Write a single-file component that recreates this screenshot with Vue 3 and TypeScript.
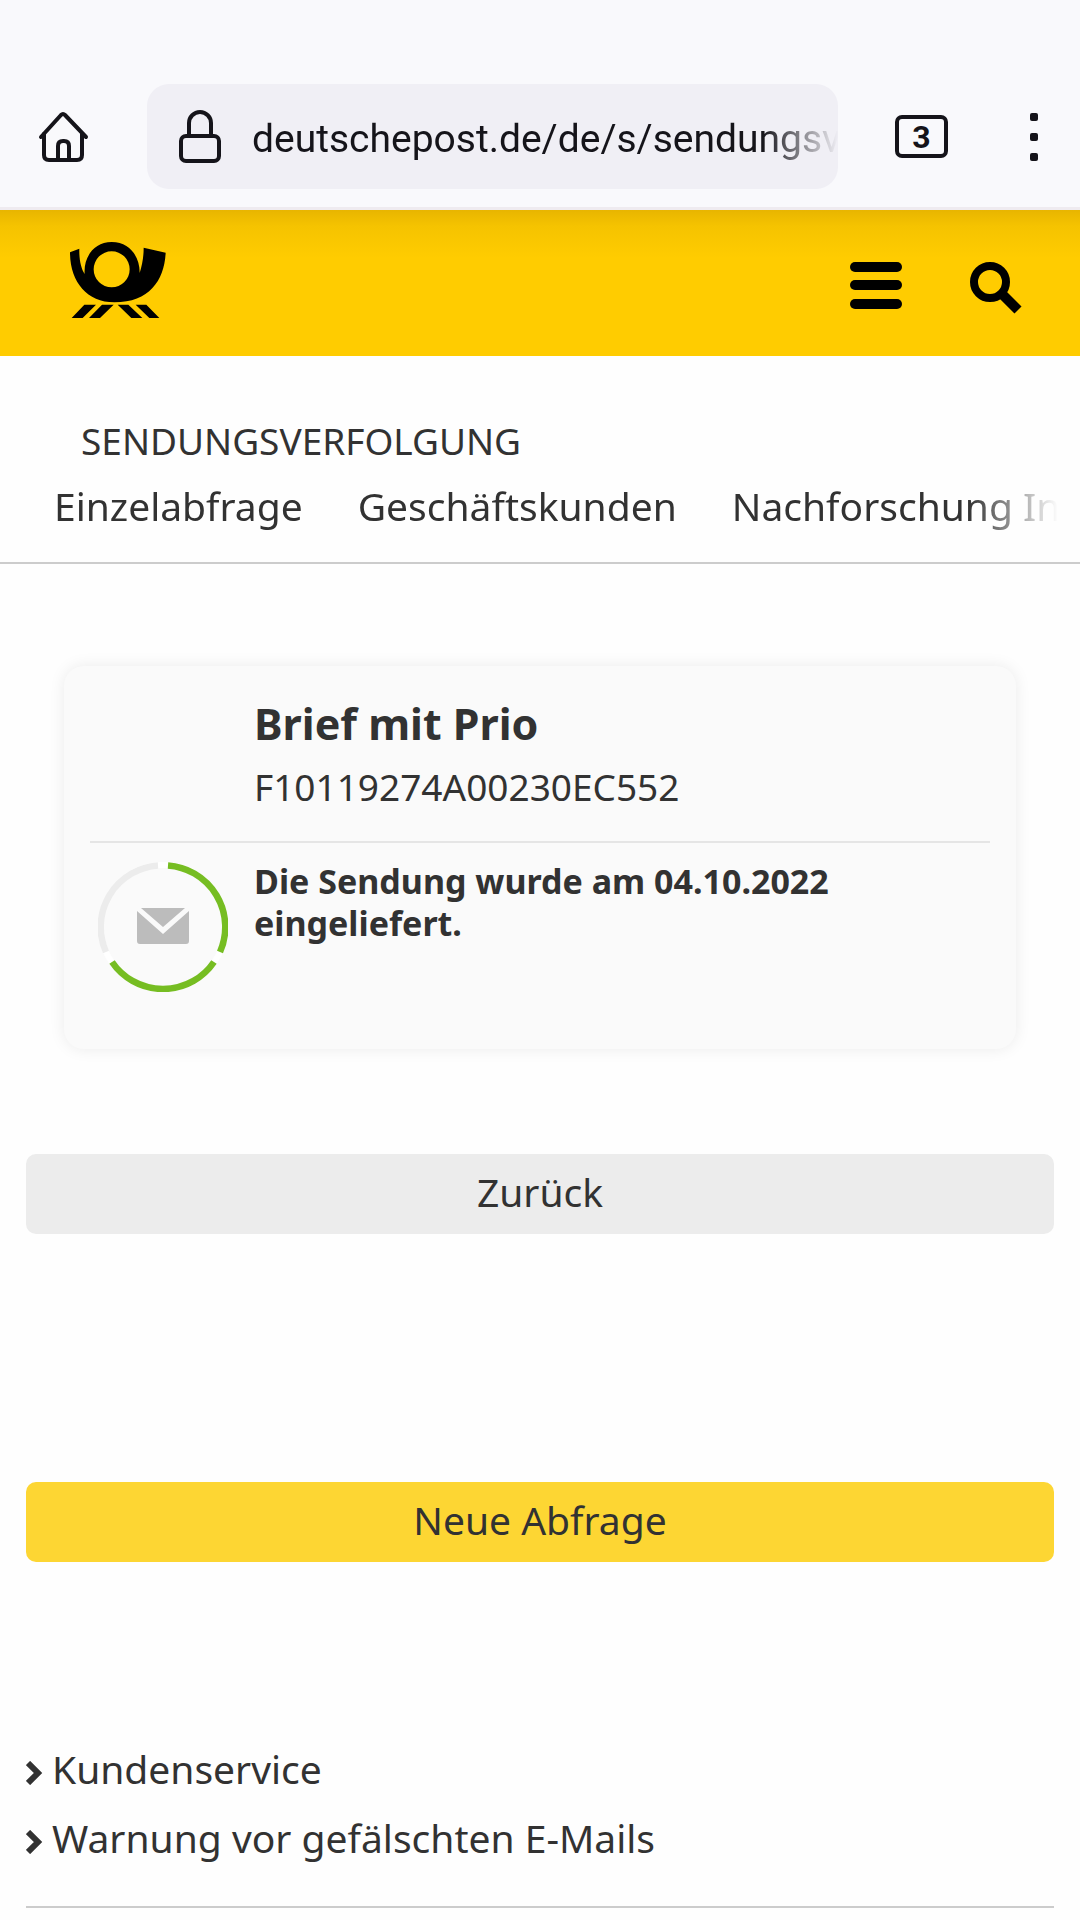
<script setup lang="ts">
import { ref } from 'vue'

interface NavLink {
  label: string
  href: string
}

const address = ref('deutschepost.de/de/s/sendungsverfolgung')
const openTabs = ref(3)

const tabs: NavLink[] = [
  { label: 'Einzelabfrage', href: '#einzelabfrage' },
  { label: 'Geschäftskunden', href: '#geschaeftskunden' },
  { label: 'Nachforschung In', href: '#nachforschung' },
]

const serviceLinks: NavLink[] = [
  { label: 'Kundenservice', href: '#kundenservice' },
  { label: 'Warnung vor gefälschten E-Mails', href: '#warnung' },
]

const shipment = {
  product: 'Brief mit Prio',
  code: 'F10119274A00230EC552',
  status: 'Die Sendung wurde am 04.10.2022 eingeliefert.',
}
</script>

<template>
  <div class="screen">
    <div class="browser">
      <button class="plain home" type="button" aria-label="Startseite">
        <svg width="52" height="52" viewBox="0 0 52 52" fill="none" stroke="currentColor" stroke-width="4" stroke-linecap="round" stroke-linejoin="round">
          <path d="M3 26 23 4Q25 2 27 4L48 26" />
          <path d="M6 23V44Q6 49 11 49H39Q44 49 44 44V23" />
          <path d="M20 48V35Q20 30 25 30H26Q31 30 31 35V48" />
        </svg>
      </button>
      <div class="address">
        <svg width="44" height="54" viewBox="0 0 44 54" fill="none" stroke="currentColor" stroke-width="4">
          <rect x="4" y="26" width="38" height="25" rx="5" />
          <path d="M12 26V13a11 11 0 0 1 22 0V26" />
        </svg>
        <input v-model="address" class="url" type="text" aria-label="Adresse" spellcheck="false" />
      </div>
      <button class="plain tab-count" type="button" aria-label="Offene Tabs">
        <span class="count">{{ openTabs }}</span>
      </button>
      <button class="plain more" type="button" aria-label="Menü">
        <svg width="8" height="48" viewBox="0 0 8 48" fill="currentColor">
          <rect width="8" height="8" y="0" rx="2" />
          <rect width="8" height="8" y="20" rx="2" />
          <rect width="8" height="8" y="40" rx="2" />
        </svg>
      </button>
    </div>

    <header class="brand">
      <a class="logo" href="#start" aria-label="Deutsche Post">
        <svg width="96" height="78" viewBox="60 64 288 234">
          <path
            fill-rule="evenodd"
            d="M60 98 88 87C87 115 92 145 104 163C100 115 130 67 185 67C242 67 270 115 269 160C277 135 281 110 281 84L347 99C343 180 300 248 193 248C110 248 60 185 60 98ZM131 149a54 54 0 1 0 108 0a54 54 0 1 0-108 0Z"
          />
          <path d="M103 255H138L98 295H65ZM156 255H191L150 295H117ZM203 255H235L277 295H244ZM257 255H289L328 295H298Z" />
        </svg>
      </a>
      <button class="plain" type="button" aria-label="Navigation">
        <svg width="52" height="48" viewBox="0 0 52 48">
          <rect width="52" height="10" y="0" rx="5" />
          <rect width="52" height="10" y="18" rx="5" />
          <rect width="52" height="10" y="37" rx="5" />
        </svg>
      </button>
      <button class="plain search" type="button" aria-label="Suche">
        <svg width="52" height="52" viewBox="0 0 52 52" fill="none" stroke="currentColor">
          <circle cx="20" cy="20" r="16" stroke-width="8" />
          <path d="M31 31 48 48" stroke-width="10" />
        </svg>
      </button>
    </header>

    <nav class="sections" aria-label="Sendungsverfolgung">
      <h1 class="heading">SENDUNGSVERFOLGUNG</h1>
      <div class="tabs">
        <a v-for="tab in tabs" :key="tab.label" :href="tab.href">{{ tab.label }}</a>
      </div>
    </nav>

    <main>
      <section class="card">
        <div class="summary">
          <h2>{{ shipment.product }}</h2>
          <p>{{ shipment.code }}</p>
        </div>
        <div class="status">
          <svg class="ring" width="130" height="130" viewBox="0 0 130 130" fill="none">
            <circle cx="65" cy="65" r="62" stroke="#ffffff" stroke-width="6" />
            <g stroke-width="6.5">
              <path d="M70 3.500A61.700 61.700 0 0 1 122 90" stroke="#76bd22" />
              <path d="M116 100A61.700 61.700 0 0 1 14 100" stroke="#76bd22" />
              <path d="M8 90A61.700 61.700 0 0 1 60 3.500" stroke="#ececec" />
            </g>
            <path d="M43 46H87L65 65ZM39 49 65 72 91 49V79Q91 82 88 82H42Q39 82 39 79Z" fill="#bcbcbc" />
          </svg>
          <p>{{ shipment.status }}</p>
        </div>
      </section>

      <button class="action back" type="button">Zurück</button>
      <button class="action query" type="button">Neue Abfrage</button>
    </main>

    <footer class="service">
      <a v-for="link in serviceLinks" :key="link.label" :href="link.href">
        <svg width="17" height="24" viewBox="0 0 17 24" fill="none" stroke="currentColor" stroke-width="6">
          <path d="M2 2 12 12 2 22" />
        </svg>
        <span>{{ link.label }}</span>
      </a>
    </footer>
  </div>
</template>

<style>
body {
  background: #ffffff;
}
</style>

<style scoped>
.screen {
  min-height: 100vh;
  background: #fefefe;
  color: #323232;
  font: 39px/52px "Noto Sans", sans-serif;
}

.screen,
.screen * {
  box-sizing: border-box;
}

svg {
  display: block;
  flex: none;
}

a {
  color: inherit;
  text-decoration: none;
}

h1,
h2,
p {
  margin: 0;
}

.plain {
  display: flex;
  flex: none;
  padding: 0;
  border: 0;
  background: none;
  color: inherit;
}

.browser {
  display: flex;
  align-items: center;
  padding: 84px 42px 18px 38px;
  border-bottom: 3px solid #efebf0;
  background: #f9f9fc;
  color: #15141a;
  font-family: Roboto, sans-serif;
}

.address {
  display: flex;
  flex: 1;
  align-items: center;
  gap: 31px;
  min-width: 0;
  height: 105px;
  margin: 0 57px;
  padding-left: 30px;
  border-radius: 22px;
  background: #f0eff5;
}

.url {
  flex: 1;
  min-width: 0;
  height: 60px;
  padding: 4px 0 0;
  border: 0;
  outline: 0;
  background: none;
  color: inherit;
  font: 39px/56px Roboto, sans-serif;
  -webkit-mask-image: linear-gradient(to left, transparent, #000 76px);
  mask-image: linear-gradient(to left, transparent, #000 76px);
}

.count {
  width: 53px;
  height: 43px;
  border: 4px solid currentColor;
  border-radius: 7px;
  font: 700 32px/36px Roboto, sans-serif;
  text-align: center;
}

.more {
  margin-left: 82px;
}

.brand {
  display: flex;
  align-items: center;
  height: 146px;
  padding: 0 58px 0 70px;
  background: linear-gradient(#e8b500, #f5c300 16px, #ffcc00 48px);
  color: #000000;
}

.logo {
  margin: 0 auto 6px 0;
}

.brand .plain {
  margin-top: 6px;
}

.brand .search {
  margin-top: 10px;
  margin-left: 68px;
}

.sections {
  padding: 61px 12px 30px 54px;
  border-bottom: 2px solid #cccccc;
}

.heading {
  padding-left: 27px;
  font-size: 37px;
  font-weight: 400;
  line-height: 48px;
}

.tabs {
  display: flex;
  gap: 55px;
  margin-top: 15px;
  overflow: hidden;
  white-space: nowrap;
  -webkit-mask-image: linear-gradient(to left, transparent 10px, #000 100px);
  mask-image: linear-gradient(to left, transparent 10px, #000 100px);
}

main {
  display: flex;
  flex-direction: column;
  padding: 102px 26px 0;
}

.card {
  margin: 0 38px 105px;
  padding: 30px 26px 57px;
  border-radius: 20px;
  background: #fafafa;
  box-shadow: 0 0 16px rgba(0, 0, 0, 0.08);
}

.summary {
  padding: 0 0 30px 164px;
  border-bottom: 2px solid #e5e5e5;
}

.summary h2 {
  font-size: 43px;
  line-height: 56px;
}

.summary p {
  margin-top: 11px;
  font-size: 37px;
  line-height: 48px;
}

.status {
  display: flex;
  gap: 26px;
  padding: 17px 0 0 8px;
  font-size: 34px;
  font-weight: 700;
  line-height: 42px;
}

.ring {
  margin-top: 2px;
}

.action {
  height: 80px;
  padding: 0 0 4px;
  border: 0;
  border-radius: 10px;
  color: inherit;
  font: inherit;
}

.back {
  background: #ececec;
}

.query {
  margin-top: 248px;
  background: #fdd633;
}

.service {
  display: flex;
  flex-direction: column;
  gap: 17px;
  margin: 181px 26px 0;
  padding-bottom: 42px;
  border-bottom: 2px solid #cccccc;
}

.service a {
  display: flex;
  align-items: center;
  gap: 9px;
}

.service svg {
  margin-top: 8px;
}
</style>
